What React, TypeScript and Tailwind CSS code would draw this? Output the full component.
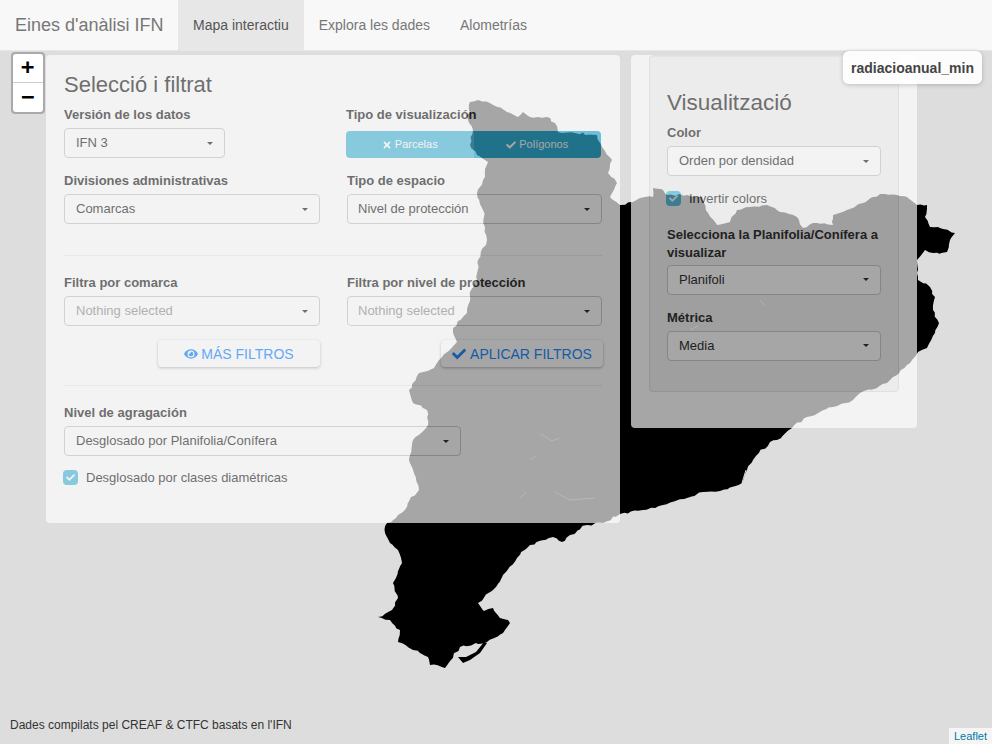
import { FaCheck, FaEye, FaTimes } from 'react-icons/fa'

const COAST: [number, number][] = [
  [470, 102], [478, 100], [493, 105], [507, 112], [518, 117], [523, 112], [530, 117], [547, 117], [555, 123], [558, 132], [575, 133], [597, 135], [602, 147], [612, 160], [608, 173], [617, 183], [610, 197], [620, 205],
  [633, 202], [640, 198], [653, 197], [653, 188], [663, 190], [667, 195], [687, 195], [702, 197], [708, 213], [717, 225], [730, 222], [737, 210], [750, 207], [767, 205], [780, 212], [797, 217], [803, 228], [817, 223], [833, 225], [833, 215], [847, 210], [863, 203], [873, 197], [885, 194], [897, 195], [907, 197], [917, 205], [927, 205], [925, 217], [930, 227], [940, 228], [955, 233], [950, 240], [947, 252], [933, 253], [925, 250], [917, 260], [917, 273], [918, 280], [930, 287], [935, 297], [933, 310], [939, 323], [935, 333], [927, 348], [918, 352], [907, 365], [887, 383], [860, 393], [853, 400], [833, 407], [807, 417], [792, 428], [777, 440],
  [770, 442], [753, 460], [747, 470], [742, 483], [720, 491], [703, 492], [687, 498], [663, 505], [643, 510], [620, 514], [603, 523], [587, 525], [570, 535], [562, 542], [553, 537], [530, 545], [517, 558], [503, 575], [493, 590], [478, 603], [484, 611], [493, 608], [500, 618], [508, 620], [510, 623], [503, 633], [487, 642], [460, 647], [445, 668], [430, 665], [428, 657], [413, 650], [398, 642], [400, 630], [390, 620], [378, 617], [392, 610], [398, 598], [393, 583], [402, 563], [398, 550], [390, 543], [385, 533], [387, 523],
  [396, 518], [405, 510], [411, 497], [419, 490], [413, 470], [409, 460], [413, 440], [428, 425], [427, 410], [413, 403], [409, 390], [419, 373], [434, 368], [442, 357], [457, 342], [453, 328], [467, 313], [471, 290], [477, 280], [478, 260], [487, 240], [485, 227], [483, 210], [477, 193], [483, 180], [488, 162], [477, 155], [470, 145], [473, 130], [468, 120],
]

// the real coast is jagged: break each segment up and nudge the points a little
function roughen(points: [number, number][]) {
  let seed = 7
  const next = () => {
    seed = (seed * 16807) % 2147483647
    return (seed % 1000) / 1000 - 0.5
  }
  const out: string[] = []
  points.forEach(([x, y], i) => {
    const [nx, ny] = points[(i + 1) % points.length]
    const steps = Math.max(1, Math.round(Math.hypot(nx - x, ny - y) / 4))
    for (let s = 0; s < steps; s++) {
      const t = s / steps
      const amp = s === 0 ? 0 : 2.4
      out.push(`${(x + (nx - x) * t + next() * amp).toFixed(1)} ${(y + (ny - y) * t + next() * amp).toFixed(1)}`)
    }
  })
  return `M${out.join(' ')}Z`
}

function Caret() {
  return <span className="h-0 w-0 border-x-[3px] border-t-[3px] border-x-transparent border-t-[#333]" />
}

function Select({ value, muted, tight, className }: { value: string; muted?: boolean; tight?: boolean; className?: string }) {
  return (
    <div className={`flex h-[30px] items-center justify-between rounded border border-[#ccc] bg-white pr-[11px] text-[13px] ${tight ? 'pl-[10px]' : 'pl-[11px]'} ${muted ? 'text-[#999]' : 'text-[#333]'} ${className ?? ''}`}>
      <span>{value}</span>
      <Caret />
    </div>
  )
}

function Label({ children }: { children: string }) {
  return <div className="mb-[4px] h-[19px] text-[13px] font-bold leading-[20px] text-[#333]">{children}</div>
}

function Check({ label }: { label: string }) {
  return (
    <div className="-ml-px flex items-center gap-2 text-[13px] text-[#333]">
      <span className="flex h-[15px] w-[15px] items-center justify-center rounded-sm bg-[#5bc0de] text-white">
        <FaCheck className="h-[9px] w-[9px]" />
      </span>
      {label}
    </div>
  )
}

function ActionButton({ icon, label, className }: { icon: React.ReactNode; label: string; className: string }) {
  return (
    <div className={`flex h-[27px] w-[162px] items-center justify-center gap-[3px] rounded-sm bg-white text-sm text-[#228dff] shadow-[0_1px_3px_rgba(0,0,0,0.3)] ${className}`}>
      {icon}
      {label}
    </div>
  )
}

export default function App() {
  return (
    <div className="relative flex h-[744px] w-[992px] flex-col overflow-hidden font-['Liberation_Sans',Arial,sans-serif]">
      <nav className="flex h-[51px] shrink-0 items-stretch border-b border-[#e7e7e7] bg-[#f8f8f8] text-sm text-[#777]">
        <div className="flex w-[178px] items-center pl-[15px] text-lg">Eines d'anàlisi IFN</div>
        <div className="flex items-center bg-[#e7e7e7] px-[15px] text-[#555]">Mapa interactiu</div>
        <div className="flex items-center px-[15px]">Explora les dades</div>
        <div className="flex items-center px-[15px]">Alometrías</div>
      </nav>

      <main className="relative flex-1 bg-[#ddd]">
        {/* territory polygon, in page coordinates */}
        <svg className="absolute left-0 top-[-51px] h-[744px] w-[992px]" viewBox="0 0 992 744">
          <path d={roughen(COAST)} fill="#000" />
          <path d="M458 657 463 663 470 660 480 653 487 643 484 642 476 652 466 657Z" fill="#000" />
          <path d="M742 483 746 470" stroke="#ddd" strokeWidth="1" fill="none" />
          <g stroke="#fff" strokeWidth="1" fill="none" opacity="0.2">
            <path d="M540 434 552 441 560 438M530 460 536 456M520 498 526 492M555 492 570 500 595 498M760 300 765 306M690 330 698 326" />
          </g>
        </svg>

        {/* zoom control */}
        <div className="absolute left-[11px] top-px w-[34px] rounded border-2 border-[#aaa]">
          <div className="flex h-[29px] items-center justify-center rounded-t-sm border-b border-[#ccc] bg-white pb-[3px] pr-px font-['DejaVu_Sans_Mono',monospace] text-[22px] font-bold leading-[26px] text-black">+</div>
          <div className="flex h-[29px] items-center justify-center rounded-b-sm bg-white pb-[2px] pr-px font-['DejaVu_Sans_Mono',monospace] text-[22px] font-bold leading-[26px] text-black">−</div>
        </div>

        {/* filter panel */}
        <section className="absolute left-[46px] top-[4px] h-[468px] w-[574px] rounded-sm bg-white px-[18px] pt-[16px] opacity-65">
          <h2 className="mb-[6px] text-[22px] leading-[28px] text-[#333]">Selecció i filtrat</h2>
          <div className="grid w-[538px] grid-cols-[256px_255px] gap-x-[27px] gap-y-[13px]">
            <div>
              <Label>Versión de los datos</Label>
              <Select value="IFN 3" className="w-[161px]" />
            </div>
            <div>
              <div className="-ml-px">
                <Label>Tipo de visualización</Label>
              </div>
              <div className="-ml-px mt-[7px] flex h-[27px] w-[255px] overflow-hidden rounded-sm text-[11px] text-white">
                <div className="flex flex-1 items-center justify-center gap-[3px] bg-[#5bc0de]">
                  <FaTimes className="h-[10px] w-[10px]" />
                  Parcelas
                </div>
                <div className="flex flex-1 items-center justify-center gap-[3px] bg-[#31b0d5]">
                  <FaCheck className="h-[10px] w-[10px]" />
                  Polígonos
                </div>
              </div>
            </div>
            <div>
              <Label>Divisiones administrativas</Label>
              <Select value="Comarcas" />
            </div>
            <div>
              <Label>Tipo de espacio</Label>
              <Select value="Nivel de protección" tight />
            </div>
          </div>

          <hr className="mb-[17px] mt-[31px] border-[#eee]" />

          <div className="grid w-[538px] grid-cols-[256px_255px] gap-x-[27px]">
            <div>
              <Label>Filtra por comarca</Label>
              <Select value="Nothing selected" muted />
            </div>
            <div>
              <Label>Filtra por nivel de protección</Label>
              <Select value="Nothing selected" muted tight />
            </div>
            <div className="mt-[14px] flex justify-end">
              <ActionButton icon={<FaEye className="h-[14px] w-[14px]" />} label="MÁS FILTROS" className="" />
            </div>
            <div className="mt-[14px] flex justify-end">
              <ActionButton icon={<FaCheck className="mr-px h-[14px] w-[14px]" />} label="APLICAR FILTROS" className="-mr-px" />
            </div>
          </div>

          <hr className="mb-[17px] mt-[18px] border-[#eee]" />

          <Label>Nivel de agragación</Label>
          <Select value="Desglosado por Planifolia/Conífera" className="w-[397px]" />
          <div className="mt-[12px]">
            <Check label="Desglosado por clases diamétricas" />
          </div>
        </section>

        {/* colour panel */}
        <section className="absolute left-[631px] top-[4px] h-[373px] w-[286px] rounded-sm bg-white pl-[18px] opacity-65">
          <div className="h-[337px] w-[250px] rounded border border-[#e3e3e3] bg-[#f5f5f5] px-[17px] pt-[33px] shadow-[inset_0_1px_1px_rgba(0,0,0,0.05)]">
            <h2 className="mb-[7px] text-[22.5px] leading-[27px] text-[#333]">Visualització</h2>
            <Label>Color</Label>
            <Select value="Orden por densidad" />
            <div className="mt-[13px]">
              <Check label="Invertir colors" />
            </div>
            <div className="mb-[3px] mt-[17px] text-[13px] font-bold leading-[18px] text-[#333]">
              Selecciona la Planifolia/Conífera a visualizar
            </div>
            <Select value="Planifoli" />
            <div className="mt-[13px]">
              <Label>Métrica</Label>
            </div>
            <Select value="Media" />
          </div>
        </section>

        {/* value tooltip */}
        <div className="absolute right-[10px] top-0 flex h-[33px] w-[139px] items-center justify-center rounded-md bg-white/90 text-sm font-bold text-[#444] shadow-[0_1px_5px_rgba(0,0,0,0.2)]">
          radiacioanual_min
        </div>

        <p className="absolute bottom-[11px] left-[10px] text-xs text-[#333]">Dades compilats pel CREAF &amp; CTFC basats en l'IFN</p>
        <div className="absolute bottom-0 right-0 flex h-4 items-center bg-white/70 px-[5px] text-[11px] text-[#0078a8]">Leaflet</div>
      </main>
    </div>
  )
}
